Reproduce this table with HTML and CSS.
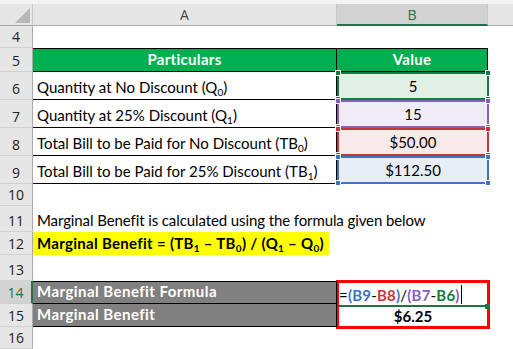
FILE: index.html
```html
<!DOCTYPE html>
<html>
<head>
<meta charset="utf-8">
<link rel="stylesheet" href="styles.css">
</head>
<body>
<div class="topstrip"></div>
<div class="sheet">
  <div class="corner"><svg width="33" height="22" viewBox="0 0 33 22"><polygon points="30,4 30,19 15,19" fill="#b7b7b7"/></svg></div>
  <div class="colhead">A</div>
  <div class="colhead sel">B</div>
  <div class="colhead rest"></div>

  <div class="rh">4</div><div class="c"></div><div class="c"></div><div class="c"></div>

  <div class="rh">5</div>
  <div class="c hdr hdr-a">Particulars</div>
  <div class="c hdr hdr-b">Value</div>
  <div class="c"></div>

  <div class="rh">6</div>
  <div class="c la"><span>Quantity at No Discount (Q<sub>0</sub>)</span></div>
  <div class="c ref ref-green"><span class="h tl"></span><span class="h tr"></span><span class="h bl"></span><span class="h br"></span>5</div>
  <div class="c"></div>

  <div class="rh">7</div>
  <div class="c la"><span>Quantity at 25% Discount (Q<sub>1</sub>)</span></div>
  <div class="c ref ref-purple"><span class="h tl"></span><span class="h tr"></span><span class="h bl"></span><span class="h br"></span>15</div>
  <div class="c"></div>

  <div class="rh">8</div>
  <div class="c la"><span>Total Bill to be Paid for No Discount (TB<sub>0</sub>)</span></div>
  <div class="c ref ref-red"><span class="h tl"></span><span class="h tr"></span><span class="h bl"></span><span class="h br"></span>$50.00</div>
  <div class="c"></div>

  <div class="rh">9</div>
  <div class="c la"><span>Total Bill to be Paid for 25% Discount (TB<sub>1</sub>)</span></div>
  <div class="c ref ref-blue"><span class="h tl"></span><span class="h tr"></span><span class="h bl"></span><span class="h br"></span>$112.50</div>
  <div class="c"></div>

  <div class="rh">10</div><div class="c"></div><div class="c"></div><div class="c"></div>

  <div class="rh">11</div>
  <div class="c wide narrow">Marginal Benefit is calculated using the formula given below</div>

  <div class="rh">12</div>
  <div class="c wide"><span class="yellow">Marginal Benefit = (TB<sub>1</sub> – TB<sub>0</sub>) / (Q<sub>1</sub> – Q<sub>0</sub>)</span></div>

  <div class="rh">13</div><div class="c"></div><div class="c"></div><div class="c"></div>

  <div class="rh sel">14</div>
  <div class="c dark dark-top">Marginal Benefit Formula</div>
  <div class="result">
    <div class="formula"><span>=<span class="k-blue">(B9</span>-<span class="k-red">B8</span><span class="k-blue">)</span>/<span class="k-purple">(B7</span>-<span class="k-green">B6</span><span class="k-purple">)</span></span><span class="cursor"></span><span class="fill"></span></div>
    <div class="value">$6.25</div>
  </div>
  <div class="c"></div>

  <div class="rh">15</div>
  <div class="c dark">Marginal Benefit</div>
  <div class="c"></div>

  <div class="rh">16</div><div class="c"></div><div class="c"></div><div class="c"></div>
</div>
</body>
</html>
```

FILE: styles.css
```css
html, body {
  margin: 0;
  padding: 0;
  background: #ffffff;
  overflow: hidden;
}
body {
  width: 513px;
  height: 349px;
  font-family: Lato, "Open Sans", sans-serif;
  font-size: 15px;
  color: #000;
}
.topstrip {
  height: 4px;
  background: #f3f3f3;
}
.sheet {
  display: grid;
  grid-template-columns: 33px 304px 151px 25px;
  grid-template-rows: 22px 22px 24px 28px 28px 28px 28px 22px 26px 23px 26px 23px 23px 22px;
}
.corner {
  background: #e6e6e6;
  border-right: 1px solid #c8c8c8;
  border-bottom: 1px solid #ababab;
  box-sizing: border-box;
}
.corner svg { display: block; }
.colhead {
  background: #e6e6e6;
  border-right: 1px solid #c8c8c8;
  border-bottom: 1px solid #ababab;
  box-sizing: border-box;
  display: flex;
  align-items: center;
  justify-content: center;
  color: #444;
  font-family: "Open Sans", Lato, sans-serif;
  font-size: 14px;
}
.colhead.sel {
  background: #d2d2d2;
  border-bottom: 2px solid #217346;
  color: #217346;
}
.colhead.rest { border-right: none; }
.rh {
  background: #e6e6e6;
  border-right: 1px solid #ababab;
  border-bottom: 1px solid #d0d0d0;
  box-sizing: border-box;
  display: flex;
  align-items: flex-end;
  justify-content: center;
  padding-bottom: 1px;
  line-height: 18px;
  color: #222;
  font-family: "Open Sans", Lato, sans-serif;
  font-size: 14px;
}
.rh.sel {
  background: #d2d2d2;
  border-right: 2px solid #217346;
  color: #217346;
}
.c {
  box-sizing: border-box;
  display: flex;
  align-items: flex-end;
  line-height: 18px;
  padding: 0 4px 3px;
  white-space: nowrap;
  position: relative;
}
.wide { grid-column: span 3; }
.narrow { letter-spacing: -0.1px; }
sub {
  font-size: 10px;
  vertical-align: -3px;
  line-height: 0;
}
.hdr {
  background: #00b050;
  color: #fff;
  font-weight: bold;
  letter-spacing: 0.3px;
  justify-content: center;
  border-top: 1px solid #000;
  border-bottom: 1px solid #000;
}
.hdr-a { border-right: 1px solid #000; }
.hdr-b { border-right: 1px solid #000; }
.la {
  border-bottom: 1px solid #000;
  border-right: 1px solid #000;
}
.ref {
  justify-content: center;
  border: 2px solid;
  margin: 0 -1px 0 0;
}
.ref-green { border-color: #107c41; background: #e2efe5; }
.ref-purple { border-color: #8a5cbf; background: #efecf7; }
.ref-red { border-color: #c8343c; background: #f9e9e9; }
.ref-blue { border-color: #3d72c8; background: #e7eef8; }
.h {
  position: absolute;
  width: 6px;
  height: 6px;
  border: 1px solid #fff;
  box-sizing: border-box;
}
.ref-green .h { background: #107c41; }
.ref-purple .h { background: #8a5cbf; }
.ref-red .h { background: #c8343c; }
.ref-blue .h { background: #3d72c8; }
.h.tl { left: -4px; top: -4px; }
.h.tr { right: -4px; top: -4px; }
.h.bl { left: -4px; bottom: -4px; }
.h.br { right: -4px; bottom: -4px; }
.yellow {
  background: #ffff00;
  font-weight: bold;
  letter-spacing: 0.3px;
  padding: 2px 5px 3px 4px;
  margin: 0 0 -3px -4px;
  line-height: 18px;
}
.dark {
  background: #808080;
  color: #fff;
  font-weight: bold;
  letter-spacing: 0.45px;
  border-bottom: 1px solid #000;
  border-right: 1px solid #000;
}
.dark-top { border-top: 1px solid #000; }
.result {
  grid-row: span 2;
  border: 3px solid #ff0000;
  margin: -1px -2px -2px -1px;
  display: flex;
  flex-direction: column;
  background: #fff;
}
.formula {
  flex: 0 0 21px;
  display: flex;
  align-items: flex-end;
  line-height: 18px;
  padding: 0 0 1px 0;
  border-bottom: 2px solid #217346;
  position: relative;
  letter-spacing: 0.2px;
}
.k-blue { color: #3d72c8; font-weight: bold; }
.k-red { color: #d0343c; font-weight: bold; }
.k-purple { color: #8a5cbf; font-weight: bold; }
.k-green { color: #107c41; font-weight: bold; }
.cursor {
  display: inline-block;
  width: 1px;
  height: 19px;
  background: #000;
  margin-left: 1px;
}
.fill {
  position: absolute;
  right: -3px;
  bottom: -4px;
  width: 5px;
  height: 5px;
  background: #217346;
}
.value {
  flex: 1;
  display: flex;
  align-items: flex-end;
  justify-content: center;
  line-height: 18px;
  padding-bottom: 1px;
  font-weight: bold;
}
```
